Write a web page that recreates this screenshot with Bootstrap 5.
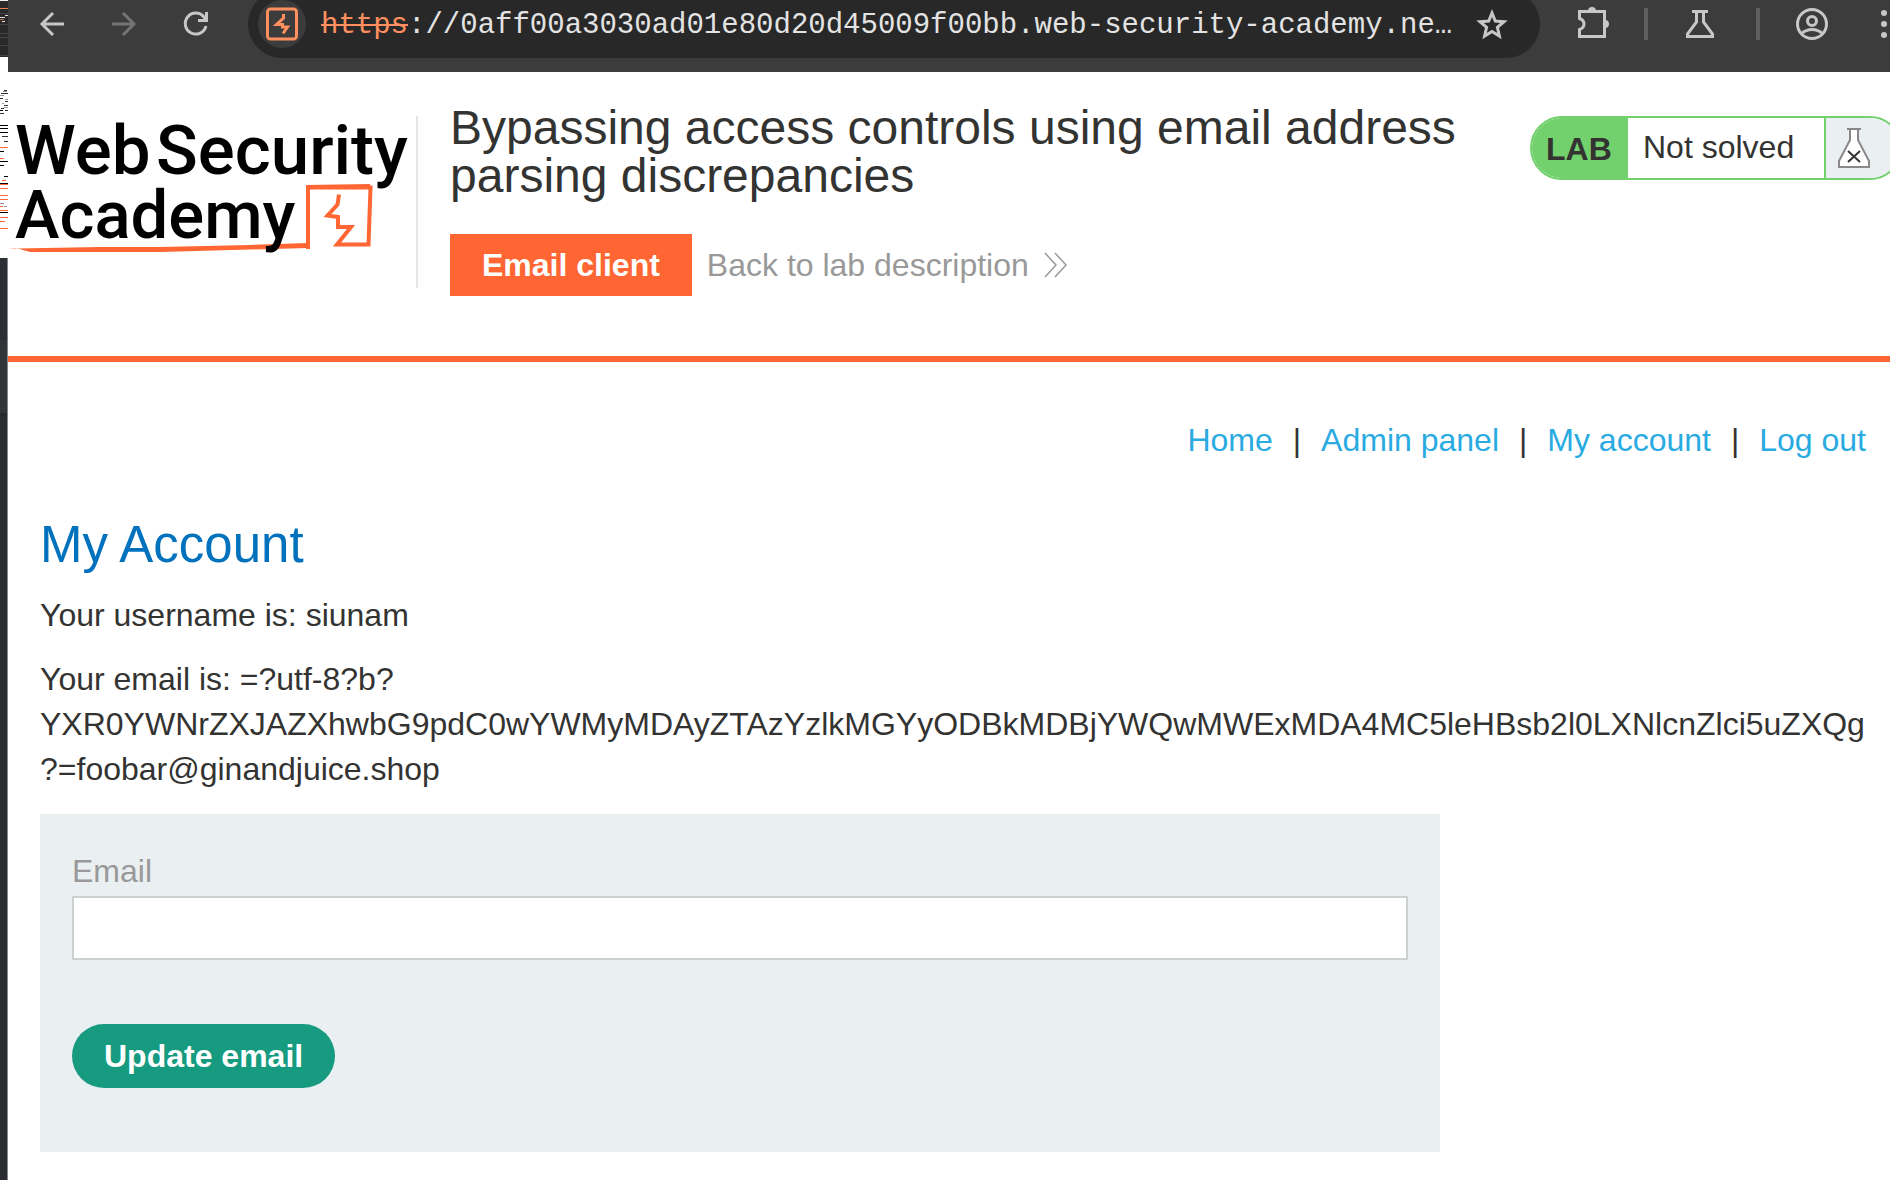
<!DOCTYPE html>
<html lang="en">
<head>
<meta charset="utf-8">
<meta name="viewport" content="width=device-width, initial-scale=1">
<title>Bypassing access controls using email address parsing discrepancies</title>
<link rel="stylesheet" href="https://cdn.jsdelivr.net/npm/bootstrap@5.3.0/dist/css/bootstrap.min.css">
<style>
body{font-family:"Liberation Sans",Arial,sans-serif;font-size:32px;line-height:45px;color:#333332;background:#fff}
.edge-strip{width:8px;background:linear-gradient(90deg,transparent 7px,#85868a 7px),linear-gradient(#2b2e33 0 340px,#333438 340px 413px,#28292c 413px 416px,#2c2d31 416px)}
.edge-strip svg{display:block}
.page-col{min-width:0;overflow:hidden}
.toolbar{height:72px;background:#3c3c3c;color:#c7c7c7;overflow:hidden}
.toolbar svg{display:block;overflow:visible}
.tool-btn{background:none;border:0;padding:0;color:inherit;flex:none}
.nav-group{height:48px;gap:48px;padding:0 40px 0 32px}
.address-pill{height:68px;margin-top:-10px;border-radius:34px;background:#282828;padding:0 32px 0 10px;min-width:0}
.site-chip{width:48px;height:48px;border-radius:50%;background:#3c3c3c;flex:none}
.address-text{font:29px/48px "Liberation Mono",monospace;color:#e3e3e3;margin-left:15px;padding-top:4px;min-width:0}
.address-text s{color:#ff8f5e}
.ext-group{height:48px;padding-left:36px;gap:36px}
.tool-rule{width:4px;height:32px;background:#5f5f5f}
.lab-header{height:290px;border-bottom:6px solid #f63;padding-top:32px}
.logo-box{margin-top:12px;width:410px;height:172px;border-right:2px solid #e5e5e5;flex:none}
.logo-box svg{display:block;overflow:visible}
.logo-box text{font-family:Roboto,sans-serif;font-weight:500;font-size:69px}
.logo-box .logo-second{font-size:67px}
.lab-title{font-size:48px;line-height:48px;font-weight:400;margin:0 0 34px}
.title-col{padding-left:32px;min-width:0}
.client-btn{background:#f63;color:#fff;font-weight:700;height:62px;line-height:62px;padding:0 32px}
.back-link{color:#999;gap:14px;margin-left:15px}
.lab-status{margin:12px -12px 0 32px;height:64px;border:2px solid #72d16c;border-radius:32px;overflow:hidden;flex:none}
.status-tag{background:#72d16c;font-weight:700;width:96px;padding-left:14px;line-height:62px}
.status-text{width:198px;padding-left:15px;line-height:58px;border-right:2px solid #72d16c}
.status-icon{background:#eaf0f2;width:74px;padding:10px 0 0 12px}
.account-nav{gap:20px;padding-top:56px}
.account-nav a{color:#29abe2}
.account-area{padding:0 24px 28px 32px}
.account-area h1{font-size:51px;line-height:61px;font-weight:400;color:#0071bc;margin:51px 0 18px}
.account-area p{margin:0 0 19px}
.email-form{max-width:1400px;margin-top:22px;padding:32px 32px 64px;background:#eaeff2}
.email-form label{line-height:50px;color:#999}
.email-form .form-control{height:64px;border:2px solid #cbd0d0;border-radius:0;font-size:32px}
.update-btn{height:64px;margin-top:64px;padding:0 32px;border:0;border-radius:32px;font-size:32px;font-weight:700;line-height:60px;background:#179b80;color:#fff}
</style>
<script src="https://cdn.jsdelivr.net/npm/bootstrap@5.3.0/dist/js/bootstrap.bundle.min.js"></script>
</head>
<body>
<div class="d-flex min-vh-100">
  <aside class="edge-strip flex-shrink-0" aria-hidden="true">
    <svg width="8" height="258" viewBox="0 0 8 258" shape-rendering="crispEdges">
      <path fill="#fff" d="M0 57h8v201H0z"/><path fill="#292929" d="M0 0h8v57H0z"/>
      <path fill="#f2f2f2" d="M0 0h8v1H0z"/><path fill="#e8834f" d="M0 8h8v1H0z"/>
      <path stroke="#444" d="M0 13.500h8M0 24.500h8M0 33.500h8M0 37.500h8M0 45.500h8M0 55.500h8"/>
      <path stroke="#ddd" d="M5 15.500h3M0 17.500h5M2 21.500h3"/><path stroke="#b56a48" d="M0 19.500h4"/>
      <path stroke="#333" d="M4 90.500h3M1 93.500h7M0 98.500h3M5 101.500h3M4 105.500h4M1 108.500h3M5 110.500h3M0 113.500h4M2 136.500h6M4 141.500h4M0 147.500h3"/>
      <path stroke="#999" d="M3 91.500h4M0 95.500h4M5 99.500h3M2 103.500h2M4 107.500h4M0 203.500h4M4 206.500h3"/>
      <path stroke="#000" d="M0 110.500h3M0 125.500h8M0 128.500h8M0 132.500h8M0 151.500h4M0 161.500h8M0 165.500h4M4 176.500h4M0 183.500h8M0 212.500h8"/>
      <path stroke="#f63" d="M0 147.500h8M0 158.500h4M2 180.500h4M0 184.500h8M0 188.500h8M0 195.500h8M0 199.500h8M0 206.500h3M0 210.500h8M0 217.500h8M0 221.500h5M0 228.500h8"/>
    </svg>
  </aside>
  <div class="page-col flex-grow-1">
    <div class="toolbar d-flex align-items-start">
      <div class="nav-group d-flex align-items-center">
        <button class="tool-btn" aria-label="Back"><svg width="24" height="24" viewBox="0 0 24 24" fill="none" stroke="#c7c7c7" stroke-width="3"><path d="M24 12H2.500M13 1 2 12l11 11"/></svg></button>
        <button class="tool-btn" aria-label="Forward"><svg width="24" height="24" viewBox="0 0 24 24" fill="none" stroke="#757575" stroke-width="3"><path d="M0 12h21.500M11 1l11 11-11 11"/></svg></button>
        <button class="tool-btn" aria-label="Reload"><svg width="24" height="24" viewBox="0 0 24 24" fill="none" stroke="#c7c7c7" stroke-width="3"><path d="M22 14A10.500 10.500 0 1 1 20 5l2 3"/><path d="M22.500 0v8.500H14"/></svg></button>
      </div>
      <div class="address-pill d-flex align-items-center flex-grow-1">
        <span class="site-chip d-flex align-items-center justify-content-center">
          <svg width="32" height="34" viewBox="0 0 32 34"><rect x="1.500" y="2" width="29" height="30" rx="3" fill="none" stroke="#ff8f5e" stroke-width="3"/><path d="M17.500 7v4l-7 6.500h6V20h5l-4.500 6.500" fill="none" stroke="#ff8f5e" stroke-width="3"/></svg>
        </span>
        <span class="address-text text-nowrap flex-grow-1"><s>https</s>://0aff00a3030ad01e80d20d45009f00bb.web-security-academy.ne…</span>
        <button class="tool-btn" aria-label="Bookmark"><svg width="32" height="32" viewBox="0 0 32 32" fill="none" stroke="#c7c7c7" stroke-width="3"><path d="m16 5 3.300 8 8.700.700-6.600 5.600 2 8.700-7.400-4.600L8.600 28l2-8.700L4 13.700l8.700-.700z"/></svg></button>
      </div>
      <div class="ext-group d-flex align-items-center">
        <button class="tool-btn" aria-label="Extensions"><svg width="32" height="34" viewBox="0 1 32 34" fill="none" stroke="#c7c7c7" stroke-width="3"><path d="M3.500 5.500h25v25h-25v-7c6-2 6-9 0-11z"/><path fill="#c7c7c7" stroke="none" d="M12 5a4 4 0 0 1 8 0zM29 14a4 4 0 0 1 0 8z"/></svg></button>
        <span class="tool-rule"></span>
        <button class="tool-btn" aria-label="Labs"><svg width="36" height="32" viewBox="1 0 36 32" fill="none" stroke="#c7c7c7" stroke-width="3"><path d="M9 3.500h16M13.500 4v10L4.500 26v2.500h25V26l-9-12V4"/></svg></button>
        <span class="tool-rule"></span>
        <button class="tool-btn" aria-label="Profile"><svg width="32" height="32" viewBox="0 0 32 32" fill="none" stroke="#c7c7c7" stroke-width="3"><circle cx="16" cy="16" r="14.500"/><circle cx="16" cy="13" r="4.500"/><path d="M5.500 25.500c6-5.500 15-5.500 21 0"/></svg></button>
        <button class="tool-btn ps-3" aria-label="Menu"><svg width="10" height="32" viewBox="0 0 10 32" fill="#c7c7c7"><circle cx="4" cy="5" r="3"/><circle cx="4" cy="16" r="3"/><circle cx="4" cy="27" r="3"/></svg></button>
      </div>
    </div>

    <header class="lab-header d-flex align-items-start">
      <a class="logo-box d-block" href="#" aria-label="Web Security Academy">
        <svg width="408" height="160" viewBox="8 116 408 160">
          <path d="m8 248 8 0 14 4 130 0 90-2.500 58-1.500v-5l-58 2-90 2-60 0-84 1.500z" fill="#f63"/>
          <path d="M308 249v-62l62-1" fill="none" stroke="#f63" stroke-width="4"/>
          <path d="M307 187.500h63.500l-2 57H337l14-17.500h-13v-10l-10.500-1.500 10-11 1.500-10" fill="none" stroke="#f63" stroke-width="4"/>
          <text x="15" y="174">Web</text><text x="156" y="174">Security</text>
          <text class="logo-second" x="15" y="238">Academy</text>
        </svg>
      </a>
      <div class="title-col flex-grow-1">
        <h2 class="lab-title">Bypassing access controls using email address parsing discrepancies</h2>
        <div class="d-flex align-items-center">
          <a class="client-btn text-decoration-none" href="#">Email client</a>
          <a class="back-link d-flex align-items-center text-decoration-none" href="#">Back to lab description
            <svg width="26" height="26" viewBox="0 0 26 26" fill="none" stroke="#999" stroke-width="1.500"><path d="m2 1 11 12L2 25M12 1l11 12-11 12"/></svg></a>
        </div>
      </div>
      <div class="lab-status d-flex">
        <span class="status-tag">LAB</span>
        <span class="status-text">Not solved</span>
        <span class="status-icon"><svg class="d-block" width="32" height="40" viewBox="0 0 32 40" fill="#fff" stroke="#888" stroke-width="2"><path d="M12 1v11L1 33v6h30v-6L20 12V1"/><path d="M9 1h14"/><path stroke="#333" stroke-width="2" d="m10 23 12 11m0-11L10 34"/></svg></span>
      </div>
    </header>

    <main class="account-area">
      <nav class="account-nav d-flex justify-content-end">
        <a class="text-decoration-none" href="#">Home</a><span>|</span>
        <a class="text-decoration-none" href="#">Admin panel</a><span>|</span>
        <a class="text-decoration-none" href="#">My account</a><span>|</span>
        <a class="text-decoration-none" href="#">Log out</a>
      </nav>
      <h1>My Account</h1>
      <p>Your username is: siunam</p>
      <p class="text-nowrap">Your email is: =?utf-8?b?<br>YXR0YWNrZXJAZXhwbG9pdC0wYWMyMDAyZTAzYzlkMGYyODBkMDBjYWQwMWExMDA4MC5leHBsb2l0LXNlcnZlci5uZXQg<br>?=foobar@ginandjuice.shop</p>
      <form class="email-form" onsubmit="return false">
        <label class="d-block" for="email">Email</label>
        <input class="form-control" type="email" id="email" name="email">
        <button class="btn update-btn" type="submit">Update email</button>
      </form>
    </main>
  </div>
</div>
</body>
</html>
